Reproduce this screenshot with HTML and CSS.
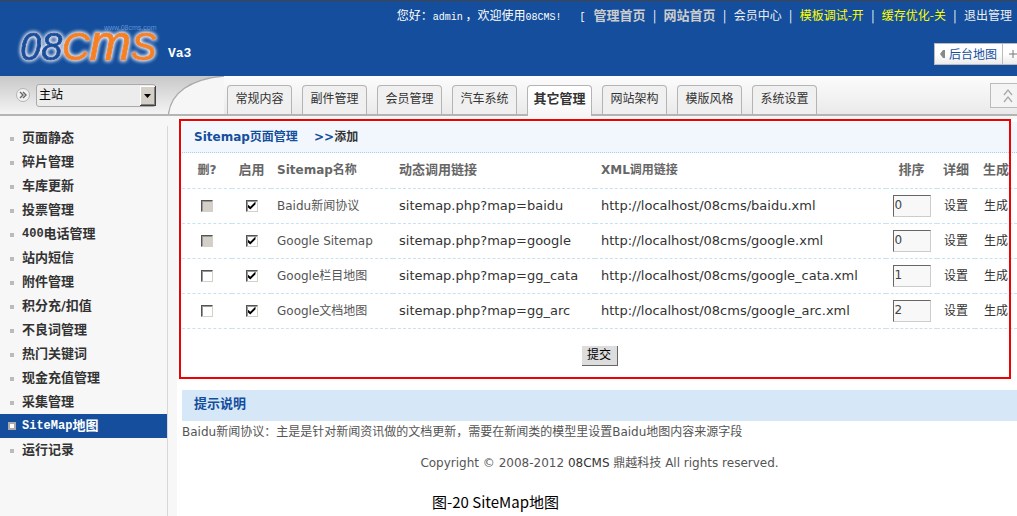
FILE: index.html
```html
<!DOCTYPE html>
<html lang="zh-CN">
<head>
<meta charset="utf-8">
<title>08CMS 后台管理</title>
<link rel="stylesheet" href="styles.css">
</head>
<body>
<header class="top">
  <a class="brand" href="#" aria-label="08CMS Va3">
    <svg class="logo" width="148" height="60" viewBox="0 0 148 60">
      <defs>
        <filter id="halo" x="-10%" y="-20%" width="120%" height="140%">
          <feGaussianBlur in="SourceAlpha" stdDeviation="2" result="soft"/>
          <feFlood flood-color="#ffffff"/>
          <feComposite in2="soft" operator="in" result="glow"/>
          <feMerge><feMergeNode in="glow"/><feMergeNode in="glow"/><feMergeNode in="SourceGraphic"/></feMerge>
        </filter>
      </defs>
      <text class="logo-url" x="88" y="14">www.08cms.com</text>
      <g filter="url(#halo)">
        <text class="logo-num" x="4" y="44">08</text>
        <text class="logo-word" x="46" y="44">C<tspan class="logo-m">m</tspan>S</text>
      </g>
    </svg>
    <span class="version">Va3</span>
  </a>
  <div class="top-side">
    <nav class="account">
      <span class="hello">您好：<span class="mono">admin</span> ，欢迎使用<span class="mono">08CMS!</span></span>
      <span class="mono">[</span>
      <a class="strong" href="#">管理首页</a><i>|</i>
      <a class="strong" href="#">网站首页</a><i>|</i>
      <a href="#">会员中心</a><i>|</i>
      <a class="warn" href="#">模板调试-开</a><i>|</i>
      <a class="warn" href="#">缓存优化-关</a><i>|</i>
      <a href="#">退出管理</a>
    </nav>
    <div class="quick">
      <button class="quick-map" type="button"><svg width="5" height="8" viewBox="0 0 5 8"><path d="M5 0v8H3L0 4 3 0z" fill="#888"/></svg>后台地图</button><button class="quick-add" type="button" aria-label="添加"><svg width="8" height="8" viewBox="0 0 8 8"><path d="M0 4h8M4 0v8" stroke="#777"/></svg></button>
    </div>
  </div>
</header>

<div class="bar">
  <div class="site">
    <svg width="14" height="14" viewBox="0 0 14 14"><circle cx="7" cy="7" r="6.500" fill="#f2f2f2" stroke="#b4b4b4"/><path d="M4 4l3 3-3 3M7 4l3 3-3 3" fill="none" stroke="#666" stroke-width="1.400"/></svg>
    <div class="picker">
      <select aria-label="站点"><option>主站</option></select>
      <svg class="picker-arrow" width="16" height="20" viewBox="0 0 16 20"><path d="M0 0h16v20H0z" fill="#404040"/><path d="M0 0h15v19H0z" fill="#fff"/><path d="M1 1h14v18H1z" fill="#808080"/><path d="M1 1h13v17H1z" fill="#d4d0c8"/><path d="M4 8h7L7.500 12z" fill="#000"/></svg>
    </div>
  </div>
  <svg class="curve" width="56" height="38" viewBox="0 0 56 38"><path d="M.5 38C3 17 22 3 56 0V38z" fill="#f6f6f6"/><path d="M.5 38C3 17 22 3 56 0" fill="none" stroke="#aaa" stroke-width="1.300"/></svg>
  <nav class="tabs">
    <a href="#">常规内容</a>
    <a href="#">副件管理</a>
    <a href="#">会员管理</a>
    <a href="#">汽车系统</a>
    <a class="on" href="#">其它管理</a>
    <a href="#">网站架构</a>
    <a href="#">模版风格</a>
    <a href="#">系统设置</a>
  </nav>
  <button class="fold" type="button" aria-label="收起"><svg width="10" height="14" viewBox="0 0 10 14"><path d="M1 6l4-5 4 5M1 13l4-5 4 5" fill="none" stroke="#aaa" stroke-width="1.300"/></svg></button>
</div>

<div class="page">
  <nav class="side">
    <a href="#">页面静态</a>
    <a href="#">碎片管理</a>
    <a href="#">车库更新</a>
    <a href="#">投票管理</a>
    <a href="#"><span class="mono">400</span>电话管理</a>
    <a href="#">站内短信</a>
    <a href="#">附件管理</a>
    <a href="#">积分充/扣值</a>
    <a href="#">不良词管理</a>
    <a href="#">热门关键词</a>
    <a href="#">现金充值管理</a>
    <a href="#">采集管理</a>
    <a class="on" href="#"><span class="mono">SiteMap</span>地图</a>
    <a href="#">运行记录</a>
  </nav>
  <main class="main">
    <form class="sitemaps">
      <h1>Sitemap页面管理 <span class="add">&gt;&gt;<a href="#">添加</a></span></h1>
      <table>
        <colgroup><col class="c-del"><col class="c-use"><col class="c-name"><col class="c-link"><col><col class="c-sort"><col class="c-set"><col class="c-make"></colgroup>
        <thead>
          <tr><th class="mid">删?</th><th class="mid han">启用</th><th>Sitemap名称</th><th class="han">动态调用链接</th><th>XML调用链接</th><th class="mid han">排序</th><th class="mid han">详细</th><th class="mid han">生成</th></tr>
        </thead>
        <tbody>
          <tr><td class="mid"><input type="checkbox" disabled aria-label="删除 Baidu新闻协议"></td><td class="mid"><input type="checkbox" checked aria-label="启用 Baidu新闻协议"></td><td class="name">Baidu新闻协议</td><td class="url">sitemap.php?map=baidu</td><td class="url">http://localhost/08cms/baidu.xml</td><td class="mid"><input class="order" type="text" value="0" aria-label="排序"></td><td class="mid"><a href="#">设置</a></td><td class="mid"><a href="#">生成</a></td></tr>
          <tr><td class="mid"><input type="checkbox" disabled aria-label="删除 Google Sitemap"></td><td class="mid"><input type="checkbox" checked aria-label="启用 Google Sitemap"></td><td class="name">Google Sitemap</td><td class="url">sitemap.php?map=google</td><td class="url">http://localhost/08cms/google.xml</td><td class="mid"><input class="order" type="text" value="0" aria-label="排序"></td><td class="mid"><a href="#">设置</a></td><td class="mid"><a href="#">生成</a></td></tr>
          <tr><td class="mid"><input type="checkbox" aria-label="删除 Google栏目地图"></td><td class="mid"><input type="checkbox" checked aria-label="启用 Google栏目地图"></td><td class="name">Google栏目地图</td><td class="url">sitemap.php?map=gg_cata</td><td class="url">http://localhost/08cms/google_cata.xml</td><td class="mid"><input class="order" type="text" value="1" aria-label="排序"></td><td class="mid"><a href="#">设置</a></td><td class="mid"><a href="#">生成</a></td></tr>
          <tr><td class="mid"><input type="checkbox" aria-label="删除 Google文档地图"></td><td class="mid"><input type="checkbox" checked aria-label="启用 Google文档地图"></td><td class="name">Google文档地图</td><td class="url">sitemap.php?map=gg_arc</td><td class="url">http://localhost/08cms/google_arc.xml</td><td class="mid"><input class="order" type="text" value="2" aria-label="排序"></td><td class="mid"><a href="#">设置</a></td><td class="mid"><a href="#">生成</a></td></tr>
        </tbody>
      </table>
      <div class="actions"><button class="submit" type="submit">提交</button></div>
      <div class="frame"></div>
    </form>
    <section class="tips">
      <h2>提示说明</h2>
      <p>Baidu新闻协议：主是是针对新闻资讯做的文档更新，需要在新闻类的模型里设置Baidu地图内容来源字段</p>
    </section>
    <footer class="copy">Copyright © 2008-2012 <a href="#">08CMS</a> 鼎越科技 All rights reserved.</footer>
    <p class="caption">图-20 SiteMap地图</p>
  </main>
</div>
</body>
</html>
```

FILE: styles.css
```css
*, *::before { box-sizing: border-box; }
body {
  margin: 0;
  min-height: 100vh;
  display: flex;
  flex-direction: column;
  background: #f7f7f7;
  color: #555;
  font: 12px/24px "DejaVu Sans", "Noto Sans CJK SC", sans-serif;
  overflow-x: hidden;
}
a { color: #333; text-decoration: none; }
button, input, select { font: inherit; margin: 0; padding: 0; border-radius: 0; }
svg { display: block; flex: none; }
h1, h2, p { margin: 0; }
.mono { font-family: "Liberation Mono", monospace; font-size: 10px; }

/* Header */
.top {
  height: 76px;
  display: flex;
  justify-content: space-between;
  background: #144e9c;
  border-top: 1px solid #444;
  color: #fff;
  font-family: "Noto Sans CJK SC", sans-serif;
}
.brand { display: flex; align-items: flex-end; padding-left: 16px; color: #fff; }
.logo-url { font: 7px "Liberation Sans", sans-serif; fill: #5f93d6; }
.logo-num { font: italic 38px "Liberation Sans", sans-serif; fill: #144e9c; stroke: #144e9c; stroke-width: 1; }
.logo-word { font: italic 38px "Liberation Sans", sans-serif; fill: #f58220; stroke: #f58220; stroke-width: 1; }
.logo-m { font-size: 50px; }
.version { font: bold 13px/16px "Liberation Mono", monospace; padding: 0 0 14px 4px; }
.top-side { display: flex; flex-direction: column; align-items: flex-end; justify-content: space-between; padding: 2px 0 11px; }
.account { display: flex; align-items: baseline; gap: 8px; padding-right: 5px; line-height: 24px; white-space: nowrap; }
.account i { width: 2px; display: flex; justify-content: center; font-style: normal; }
.account a { color: #eee; }
.account .strong { font-size: 13px; font-weight: bold; color: #ccc; }
.account .warn { color: #ff0; }
.hello { margin-right: 10px; }
.quick { display: flex; }
.quick button {
  height: 22px;
  display: flex;
  align-items: center;
  border: 1px solid #bbb;
  background: linear-gradient(#fff 50%, #ebebeb);
  color: #144e9c;
}
.quick-map { gap: 4px; padding: 0 5px; }
.quick .quick-add { width: 14px; border-left: 0; border-right: 0; justify-content: flex-end; }

/* Tab bar */
.bar {
  height: 40px;
  display: flex;
  align-items: flex-end;
  background: linear-gradient(#fcfcfc, #eaeaea);
  border-bottom: 2px solid #b4b4b4;
}
.site {
  align-self: stretch;
  width: 168px;
  display: flex;
  align-items: center;
  gap: 6px;
  padding-left: 16px;
  background: linear-gradient(#c8c8c8, #f4f4f4);
}
.picker { position: relative; }
.picker select {
  appearance: none;
  display: block;
  width: 120px;
  height: 23px;
  padding: 0 20px 0 2px;
  border: 1px solid #aaa;
  border-radius: 3px;
  background: #ececec;
  color: #000;
  font-size: 12px;
  line-height: 20px;
}
.picker-arrow { position: absolute; right: 0; top: 2px; pointer-events: none; }
.curve { background: linear-gradient(#c8c8c8, #f4f4f4); }
.tabs { flex: 1; display: flex; gap: 10px; padding-left: 3px; }
.tabs a {
  width: 65px;
  height: 29px;
  border: 1px solid #b4b4b4;
  border-bottom: 0;
  border-radius: 4px 4px 0 0;
  background: #f0f0f0;
  line-height: 26px;
  text-align: center;
  white-space: nowrap;
}
.tabs .on {
  height: 31px;
  margin-bottom: -2px;
  background: linear-gradient(#fff 50%, #f5f5f5);
  font-size: 13px;
  font-weight: bold;
}
.fold {
  width: 27px;
  height: 25px;
  display: flex;
  align-items: center;
  padding-left: 12px;
  margin-bottom: 6px;
  border: 1px solid #bbb;
  border-right: 0;
  background: #f4f4f4;
}

/* Page body */
.page { flex: 1; display: flex; }
.side {
  width: 168px;
  flex: none;
  margin: 10px 9px 0 0;
  border-right: 1px solid #d8d8d8;
  font-size: 13px;
  font-weight: bold;
}
.side a { height: 24px; display: flex; align-items: center; line-height: 22px; }
.side a::before { content: ""; width: 4px; height: 4px; margin: 2px 8px 0 10px; background: #bbb; }
.side .on { background: #144e9c; color: #fff; }
.side .on::before { width: 8px; height: 8px; margin: 0 6px 0 8px; border: 2px solid #aaa; background: #fff; }
.side .mono { font-size: 12px; }
.main { flex: 1; min-width: 0; margin-top: 3px; padding: 3px 0 0 5px; background: #fff; }

/* Sitemap form */
.sitemaps { position: relative; }
.frame { position: absolute; inset: -3px 6px 0 -3px; border: 2px solid #f00000; pointer-events: none; }
h1, h2 { height: 31px; padding-left: 12px; color: #144e9c; font-size: 12px; line-height: 31px; }
h1 { background: #f2f7fe; border-bottom: 1px dotted #a8d0ee; }
.add { padding-left: 12px; }
table { width: 100%; table-layout: fixed; border-collapse: collapse; }
.c-del { width: 50px; }
.c-use { width: 39px; }
.c-name { width: 122px; }
.c-link { width: 202px; }
.c-sort { width: 51px; }
.c-set { width: 38px; }
.c-make { width: 42px; }
th, td { height: 35px; padding: 0 0 0 6px; border-bottom: 1px dashed #c6e2f5; text-align: left; white-space: nowrap; }
th { color: #666; font-size: 12px; }
.han { font-size: 13px; }
.mid { padding: 0; text-align: center; }
.url { color: #333; font-size: 13px; }
input[type="checkbox"] {
  appearance: none;
  display: block;
  width: 12px;
  height: 12px;
  margin: 0 auto;
  border: 1px solid;
  border-color: #555 #d4d0c8 #d4d0c8 #555;
  box-shadow: inset 1px 1px #999;
  background: #fff;
}
input[type="checkbox"]:disabled { background: #d4d0c8; }
input[type="checkbox"]:checked::before {
  content: "";
  display: block;
  width: 8px;
  height: 8px;
  margin: 1px;
  background: #000;
  clip-path: polygon(0 35%, 35% 65%, 100% 0, 100% 35%, 35% 100%, 0 70%);
}
.order {
  display: block;
  width: 38px;
  height: 22px;
  margin: 0 auto;
  padding: 0 0 2px 1px;
  border: 1px solid;
  border-color: #666 #ccc #ccc #666;
  background: #f8f8f8;
  color: #444;
}
.actions { display: flex; justify-content: center; padding: 17px 0 13px; }
.submit { width: 36px; height: 20px; border: 0 solid #666; border-width: 0 1px 1px 0; background: #ddd; color: #000; line-height: 18px; }

/* Notes and footer */
.tips { margin-top: 11px; }
h2 { background: #d6e7f7; font-size: 13px; line-height: 28px; }
.tips p { line-height: 22px; }
.copy { padding-top: 8px; text-align: center; }
.caption { padding: 15px 0 0 250px; color: #000; font: 15px/24px "Noto Sans CJK SC", sans-serif; }
```
